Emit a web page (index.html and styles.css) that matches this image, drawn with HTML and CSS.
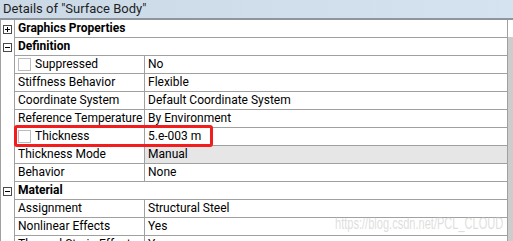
FILE: index.html
```html
<!DOCTYPE html>
<html>
<head>
    <meta charset="utf-8">
    <link rel="stylesheet" href="styles.css">
</head>
<body>
    <div id="detailsPanel">
        <div class="title">Details of "Surface Body"</div>
        <div class="body">
            <div class="grid">
                <div class="row category">
                    <div class="exp"><svg width="9" height="9" viewBox="0 0 9 9"><rect x="0.5" y="0.5" width="8" height="8" fill="#fff" stroke="#4a4a4a"/><path d="M2 4.5h5M4.5 2v5" stroke="#000"/></svg></div>
                    <div class="cat">Graphics Properties</div>
                </div>
                <div class="row category">
                    <div class="exp"><svg width="9" height="9" viewBox="0 0 9 9"><rect x="0.5" y="0.5" width="8" height="8" fill="#fff" stroke="#4a4a4a"/><path d="M2 4.5h5" stroke="#000"/></svg></div>
                    <div class="cat">Definition</div>
                </div>
                <div class="row">
                    <div class="exp"></div>
                    <div class="name"><span class="check"></span>Suppressed</div>
                    <div class="value">No</div>
                </div>
                <div class="row">
                    <div class="exp"></div>
                    <div class="name">Stiffness Behavior</div>
                    <div class="value">Flexible</div>
                </div>
                <div class="row">
                    <div class="exp"></div>
                    <div class="name">Coordinate System</div>
                    <div class="value">Default Coordinate System</div>
                </div>
                <div class="row">
                    <div class="exp"></div>
                    <div class="name">Reference Temperature</div>
                    <div class="value">By Environment</div>
                </div>
                <div class="row">
                    <div class="exp"></div>
                    <div class="name"><span class="check"></span>Thickness</div>
                    <div class="value">5.e-003 m</div>
                </div>
                <div class="row">
                    <div class="exp"></div>
                    <div class="name">Thickness Mode</div>
                    <div class="value readonly">Manual</div>
                </div>
                <div class="row">
                    <div class="exp"></div>
                    <div class="name">Behavior</div>
                    <div class="value">None</div>
                </div>
                <div class="row category">
                    <div class="exp"><svg width="9" height="9" viewBox="0 0 9 9"><rect x="0.5" y="0.5" width="8" height="8" fill="#fff" stroke="#4a4a4a"/><path d="M2 4.5h5" stroke="#000"/></svg></div>
                    <div class="cat">Material</div>
                </div>
                <div class="row">
                    <div class="exp"></div>
                    <div class="name">Assignment</div>
                    <div class="value">Structural Steel</div>
                </div>
                <div class="row">
                    <div class="exp"></div>
                    <div class="name">Nonlinear Effects</div>
                    <div class="value">Yes</div>
                </div>
                <div class="row">
                    <div class="exp"></div>
                    <div class="name">Thermal Strain Effects</div>
                    <div class="value">Yes</div>
                </div>
            </div>
            <div class="scrollbar"><div class="thumbGap"></div></div>
        </div>
        <div class="highlight"></div>
        <div class="watermark">https://blog.csdn.net/PCL_CLOUD</div>
    </div>
</body>
</html>
```

FILE: styles.css
```css
body, html {
    margin: 0;
    height: 100%;
    overflow: hidden;
    background-color: #fff;
}
#detailsPanel {
    position: relative;
    width: 513px;
    height: 241px;
    overflow: hidden;
    font-family: Roboto, "Noto Sans", sans-serif;
    font-size: 12px;
    color: #000;
}
.title {
    height: 18px;
    line-height: 17px;
    padding-left: 3px;
    font-size: 13px;
    color: #1e1e1e;
    background: linear-gradient(to right, #cbd9e7, #d5e3f1);
    border-bottom: 2px solid #8e959c;
}
.body {
    display: flex;
}
.grid {
    flex-grow: 1;
    border-left: 1px solid #a0a0a0;
}
.row {
    display: flex;
    height: 18px;
}
.exp {
    width: 13px;
    display: flex;
    align-items: center;
    justify-content: center;
    box-sizing: border-box;
    padding-left: 1px;
    padding-right: 1px;
}
.exp svg {
    display: block;
}
.cat, .name, .value {
    box-sizing: border-box;
    border-left: 1px solid #a0a0a0;
    border-bottom: 1px solid #a0a0a0;
    line-height: 17px;
    white-space: nowrap;
    overflow: hidden;
}
.cat {
    flex-grow: 1;
    padding-left: 3px;
    font-weight: bold;
    border-right: 1px solid #a0a0a0;
}
.name {
    width: 130px;
    padding-left: 3px;
    display: flex;
    align-items: center;
}
.value {
    flex-grow: 1;
    padding-left: 3px;
    border-right: 1px solid #a0a0a0;
}
.value.readonly {
    background-color: #e6e6e6;
}
.check {
    width: 11px;
    height: 11px;
    border: 1px solid #bcbcbc;
    margin-right: 4px;
    flex-shrink: 0;
}
.scrollbar {
    width: 5px;
    background-color: #cdcdcd;
}
.thumbGap {
    height: 17px;
    background-color: #fff;
}
.highlight {
    position: absolute;
    left: 14px;
    top: 125px;
    width: 193px;
    height: 16px;
    border: 3px solid #f21d1d;
    border-radius: 3px;
}
.watermark {
    position: absolute;
    left: 335px;
    top: 214px;
    font-family: "Liberation Sans", sans-serif;
    font-size: 17px;
    color: rgba(190, 190, 190, 0.5);
    white-space: nowrap;
    transform: scaleX(0.65);
    transform-origin: left top;
}
```
